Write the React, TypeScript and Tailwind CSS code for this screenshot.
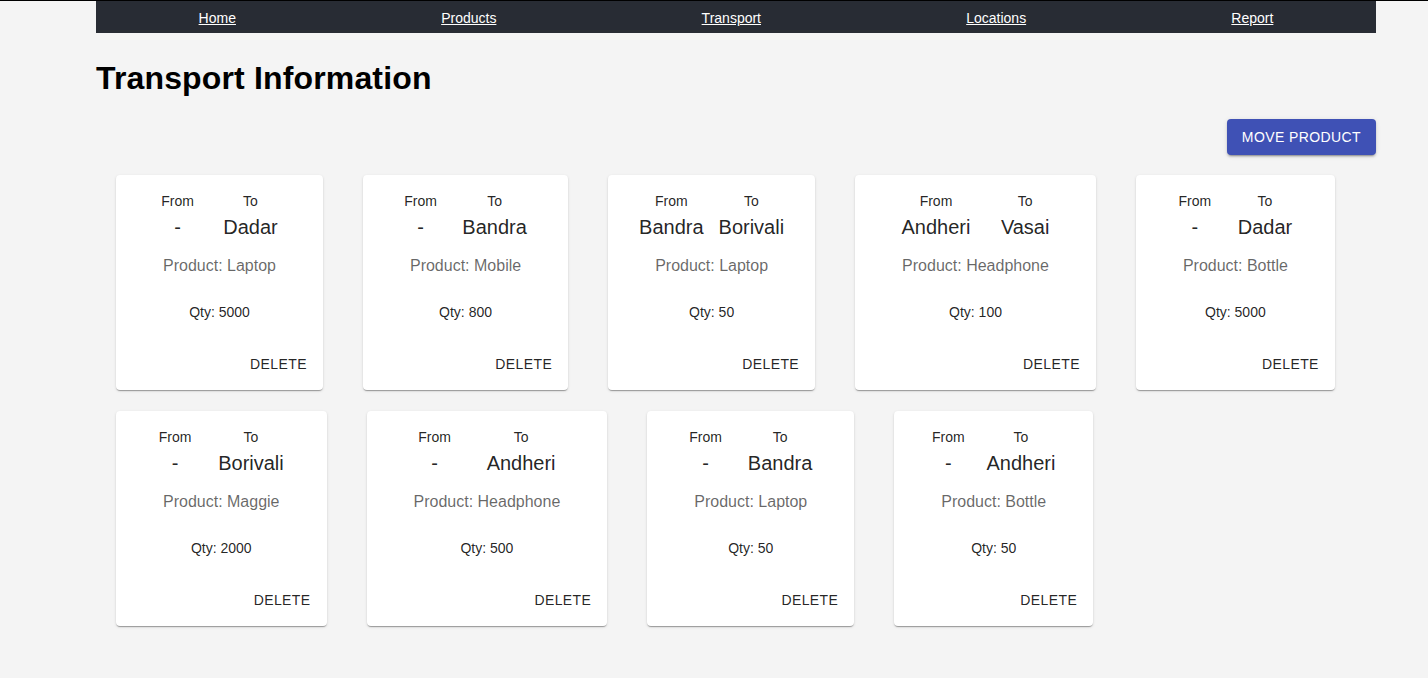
import React from "react";

type T = { from: string; to: string; product: string; qty: number };

const rows: T[] = [
  { from: "-", to: "Dadar", product: "Laptop", qty: 5000 },
  { from: "-", to: "Bandra", product: "Mobile", qty: 800 },
  { from: "Bandra", to: "Borivali", product: "Laptop", qty: 50 },
  { from: "Andheri", to: "Vasai", product: "Headphone", qty: 100 },
  { from: "-", to: "Dadar", product: "Bottle", qty: 5000 },
  { from: "-", to: "Borivali", product: "Maggie", qty: 2000 },
  { from: "-", to: "Andheri", product: "Headphone", qty: 500 },
  { from: "-", to: "Bandra", product: "Laptop", qty: 50 },
  { from: "-", to: "Andheri", product: "Bottle", qty: 50 },
];

const links = ["Home", "Products", "Transport", "Locations", "Report"];

function Card({ t }: { t: T }) {
  return (
    <div className="bg-white rounded-[4px] shadow-[0px_2px_1px_-1px_rgba(0,0,0,0.2),0px_1px_1px_0px_rgba(0,0,0,0.14),0px_1px_3px_0px_rgba(0,0,0,0.12)] flex flex-col">
      <div className="px-4 pt-4 pb-4 flex flex-col items-center text-[rgba(0,0,0,0.87)]">
        <div className="flex justify-evenly w-full">
          <div className="flex flex-col items-center">
            <div className="text-[14px] leading-[20px]">From</div>
            <div className="text-[20px] leading-[32px]">{t.from}</div>
          </div>
          <div className="flex flex-col items-center">
            <div className="text-[14px] leading-[20px]">To</div>
            <div className="text-[20px] leading-[32px]">{t.to}</div>
          </div>
        </div>
        <div className="mt-[11px] px-[31px] text-[16px] leading-[24px] text-[rgba(0,0,0,0.6)] whitespace-nowrap">
          Product: {t.product}
        </div>
        <div className="mt-[24px] text-[14px] leading-[20px]">Qty: {t.qty}</div>
      </div>
      <div className="p-2 flex justify-end">
        <button className="h-9 px-2 pt-[1px] rounded-[4px] text-[14px] uppercase tracking-[0.4px] text-[rgba(0,0,0,0.87)]">
          Delete
        </button>
      </div>
    </div>
  );
}

export default function App() {
  return (
    <div
      className="min-h-[678px] bg-[#f4f4f4]"
      style={{ fontFamily: '"Liberation Sans", Arial, sans-serif' }}
    >
      <div className="h-px bg-black" />
      <div className="ml-[96px] w-[1280px]">
        <nav className="h-8 bg-[#282c34] flex items-center justify-around pt-[1px]">
          {links.map((l) => (
            <a key={l} href="#" className="text-white text-[14px] underline leading-[20px]">
              {l}
            </a>
          ))}
        </nav>
        <h1 className="mt-[21px] text-[32px] leading-[48px] font-bold text-black tracking-[0.15px]">
          Transport Information
        </h1>
        <div className="mt-[17px] flex justify-end">
          <button className="h-9 px-[15px] rounded-[4px] bg-[#3f51b5] text-white text-[14px] uppercase tracking-[0.4px] shadow-[0px_3px_1px_-2px_rgba(0,0,0,0.2),0px_2px_2px_0px_rgba(0,0,0,0.14),0px_1px_5px_0px_rgba(0,0,0,0.12)]">
            Move Product
          </button>
        </div>
        <div className="flex flex-wrap gap-x-10 gap-y-[21px] px-5 pt-5">
          {rows.map((t, i) => (
            <Card key={i} t={t} />
          ))}
        </div>
      </div>
    </div>
  );
}
